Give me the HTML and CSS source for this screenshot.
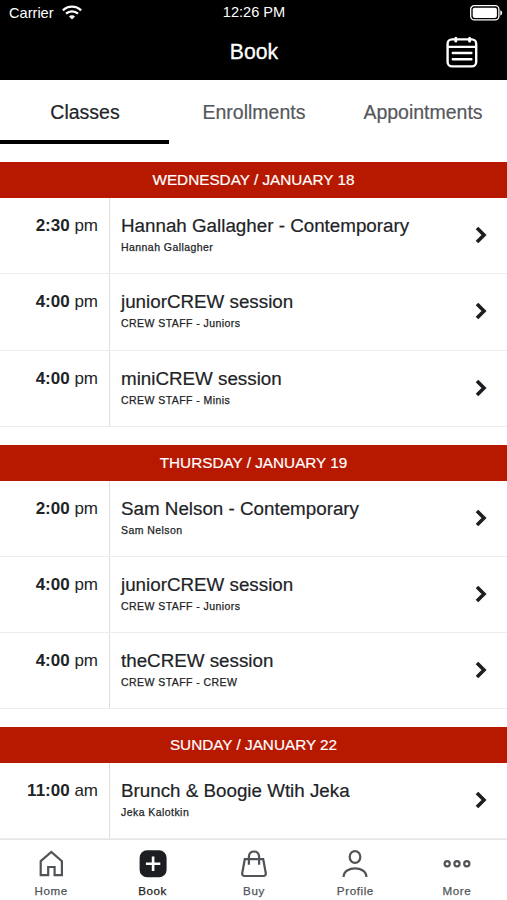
FILE: index.html
```html
<!DOCTYPE html>
<html lang="en">
<head>
  <meta charset="utf-8">
  <meta name="viewport" content="width=device-width, initial-scale=1">
  <title>Book</title>
  <link rel="stylesheet" href="styles.css">
</head>
<body>
  <div class="app">
    <header class="header">
      <div class="status">
        <div class="carrier">
          Carrier
          <svg width="20" height="15" viewBox="0 0 20 15" fill="none" stroke="#fff" stroke-width="2.3">
            <path d="M0.9 5.3C6 .4 14 .4 19.1 5.3"/>
            <path d="M4 8.7C7.4 5.6 12.6 5.6 16 8.7"/>
            <path d="M7 11.4C8.6 9.8 11.4 9.8 13 11.4L10 14.4Z" fill="#fff" stroke="none"/>
          </svg>
        </div>
        <div class="clock">12:26 PM</div>
        <svg class="battery" width="33" height="16" viewBox="0 0 33 16">
          <rect x=".7" y=".7" width="28.2" height="14.2" rx="3.6" fill="none" stroke="#fff" stroke-width="1.3"/>
          <rect x="2.7" y="2.7" width="24.2" height="10.2" rx="1.8" fill="#fff"/>
          <path d="M30.3 5.2C32.8 6 32.8 9.8 30.3 10.6Z" fill="#fff"/>
        </svg>
      </div>
      <div class="navbar">
        <h1>Book</h1>
        <svg class="calendar" width="32" height="32" viewBox="0 0 32 32" fill="none" stroke="#fff" stroke-width="2.4" stroke-linecap="round">
          <rect x="1.6" y="3.4" width="28.6" height="27" rx="4.5"/>
          <path d="M2 10.9H30M6.8 17H25.4M6.8 23.2H25.4"/>
          <path d="M9.8 2.2V5M23.6 2.2V5" stroke-width="3"/>
        </svg>
      </div>
    </header>

    <nav class="tabs">
      <a class="tab active">Classes</a>
      <a class="tab">Enrollments</a>
      <a class="tab">Appointments</a>
    </nav>

    <main class="schedule">
      <section class="day">
        <h2>WEDNESDAY / JANUARY 18</h2>
        <div class="row">
          <div class="time"><b>2:30</b> pm</div>
          <div class="info"><h3>Hannah Gallagher - Contemporary</h3><p>Hannah Gallagher</p></div>
          <svg class="chevron" viewBox="0 0 12 18"><path d="M2 2L9 9L2 16"/></svg>
        </div>
        <div class="row">
          <div class="time"><b>4:00</b> pm</div>
          <div class="info"><h3>juniorCREW session</h3><p>CREW STAFF - Juniors</p></div>
          <svg class="chevron" viewBox="0 0 12 18"><path d="M2 2L9 9L2 16"/></svg>
        </div>
        <div class="row">
          <div class="time"><b>4:00</b> pm</div>
          <div class="info"><h3>miniCREW session</h3><p>CREW STAFF - Minis</p></div>
          <svg class="chevron" viewBox="0 0 12 18"><path d="M2 2L9 9L2 16"/></svg>
        </div>
      </section>

      <section class="day">
        <h2>THURSDAY / JANUARY 19</h2>
        <div class="row">
          <div class="time"><b>2:00</b> pm</div>
          <div class="info"><h3>Sam Nelson - Contemporary</h3><p>Sam Nelson</p></div>
          <svg class="chevron" viewBox="0 0 12 18"><path d="M2 2L9 9L2 16"/></svg>
        </div>
        <div class="row">
          <div class="time"><b>4:00</b> pm</div>
          <div class="info"><h3>juniorCREW session</h3><p>CREW STAFF - Juniors</p></div>
          <svg class="chevron" viewBox="0 0 12 18"><path d="M2 2L9 9L2 16"/></svg>
        </div>
        <div class="row">
          <div class="time"><b>4:00</b> pm</div>
          <div class="info"><h3>theCREW session</h3><p>CREW STAFF - CREW</p></div>
          <svg class="chevron" viewBox="0 0 12 18"><path d="M2 2L9 9L2 16"/></svg>
        </div>
      </section>

      <section class="day">
        <h2>SUNDAY / JANUARY 22</h2>
        <div class="row">
          <div class="time"><b>11:00</b> am</div>
          <div class="info"><h3>Brunch &amp; Boogie Wtih Jeka</h3><p>Jeka Kalotkin</p></div>
          <svg class="chevron" viewBox="0 0 12 18"><path d="M2 2L9 9L2 16"/></svg>
        </div>
      </section>
    </main>

    <footer class="tabbar">
      <a class="item">
        <svg viewBox="0 0 28 28"><path d="M3.7 11.2L14.3 2L24.9 11.2V25.2H17.6V17H11.2V25.2H3.7Z"/></svg>
        <span>Home</span>
      </a>
      <a class="item active">
        <svg viewBox="0 0 28 28">
          <rect class="fill" x=".6" y=".3" width="27" height="27" rx="7.5"/>
          <path class="plus" d="M14.1 6.6V21M6.9 13.8H21.3"/>
        </svg>
        <span>Book</span>
      </a>
      <a class="item">
        <svg viewBox="0 0 28 28">
          <path d="M4.8 9.2H23.2L25.8 23.2Q26 26 23.3 26H4.7Q2 26 2.2 23.2Z"/>
          <path d="M8.9 14.7V6.3Q9.4 1.5 14 1.5T19.1 6.3V14.7"/>
        </svg>
        <span>Buy</span>
      </a>
      <a class="item">
        <svg viewBox="0 0 28 28"><ellipse cx="14" cy="7" rx="5.3" ry="5.9"/><path d="M2.6 27C2.6 15.5 25.4 15.5 25.4 27"/></svg>
        <span>Profile</span>
      </a>
      <a class="item">
        <svg viewBox="0 0 28 28"><circle cx="4.2" cy="13.8" r="2.6"/><circle cx="14" cy="13.8" r="2.6"/><circle cx="23.8" cy="13.8" r="2.6"/></svg>
        <span>More</span>
      </a>
    </footer>
  </div>
</body>
</html>
```

FILE: styles.css
```css
* {
  box-sizing: border-box;
}
body {
  margin: 0;
  font-family: "Liberation Sans", Arial, sans-serif;
  color: #212326;
  background: #fff;
}
h1, h2, h3, p {
  margin: 0;
  font-weight: normal;
}
svg {
  display: block;
  flex: none;
}
.app {
  height: 900px;
  display: flex;
  flex-direction: column;
  overflow: hidden;
}

/* header */
.header {
  flex: none;
  height: 80px;
  background: #000;
  color: #fff;
}
.status {
  display: grid;
  grid-template-columns: 1fr auto 1fr;
  align-items: center;
  height: 25px;
  padding: 0 4px 0 9px;
  font-size: 14.6px;
}
.carrier {
  display: flex;
  align-items: center;
  gap: 8px;
}
.clock {
  padding-right: 4px;
  margin-top: -2px;
}
.battery {
  justify-self: end;
}
.navbar {
  display: grid;
  grid-template-columns: 1fr auto 1fr;
  align-items: center;
  height: 54px;
  padding-right: 29px;
  padding-left: 30px;
}
.navbar h1 {
  grid-column: 2;
  font-size: 21.2px;
  -webkit-text-stroke: 0.3px;
}
.calendar {
  justify-self: end;
}

/* top tabs */
.tabs {
  flex: none;
  display: grid;
  grid-template-columns: repeat(3, 1fr);
  height: 64px;
  margin-bottom: 18.3px;
}
.tab {
  display: flex;
  align-items: center;
  justify-content: center;
  padding: 4px 0 0 1px;
  border-bottom: 4px solid transparent;
  font-size: 19.5px;
  color: #55585c;
  -webkit-text-stroke: 0.2px;
}
.tab.active {
  border-bottom-color: #000;
  color: #212326;
}

/* class list */
.schedule {
  flex: 1;
  min-height: 0;
  overflow: hidden;
}
.day {
  margin-bottom: 18px;
}
.day h2 {
  height: 36px;
  line-height: 36px;
  background: #b71900;
  color: #fff;
  font-size: 15.3px;
  text-align: center;
  -webkit-text-stroke: 0.2px;
}
.row {
  display: flex;
  height: 76.17px;
  border-bottom: 1px solid #ececec;
}
.time {
  width: 110px;
  padding: 18px 11px 0 0;
  border-right: 1px solid #dedede;
  font-size: 17px;
  line-height: 20px;
  text-align: right;
}
.info {
  flex: 1;
  padding: 17px 0 0 11px;
}
.info h3 {
  font-size: 18.8px;
  line-height: 22px;
  -webkit-text-stroke: 0.2px;
}
.info p {
  margin-top: 4px;
  font-size: 10.5px;
  line-height: 13px;
  letter-spacing: 0.44px;
  -webkit-text-stroke: 0.25px;
}
.chevron {
  width: 12px;
  height: 18px;
  margin: 28px 20px 0 0;
  fill: none;
  stroke: #1c1e21;
  stroke-width: 3.6;
}

/* bottom bar */
.tabbar {
  flex: none;
  display: grid;
  grid-template-columns: repeat(5, 1fr);
  height: 61px;
  border-top: 1px solid #e6e6e6;
}
.item {
  display: flex;
  flex-direction: column;
  align-items: center;
  padding: 10px 0 0 1px;
  gap: 6px;
  font-size: 11.6px;
  line-height: 13px;
  letter-spacing: 0.6px;
  color: #505357;
  -webkit-text-stroke: 0.25px;
}
.item svg {
  width: 28px;
  height: 28px;
  fill: none;
  stroke: #505357;
  stroke-width: 2.2;
}
.item.active {
  color: #1c1e21;
}
.item .fill {
  fill: #1c1e21;
  stroke: none;
}
.item .plus {
  stroke: #fff;
  stroke-width: 2.6;
}
```
